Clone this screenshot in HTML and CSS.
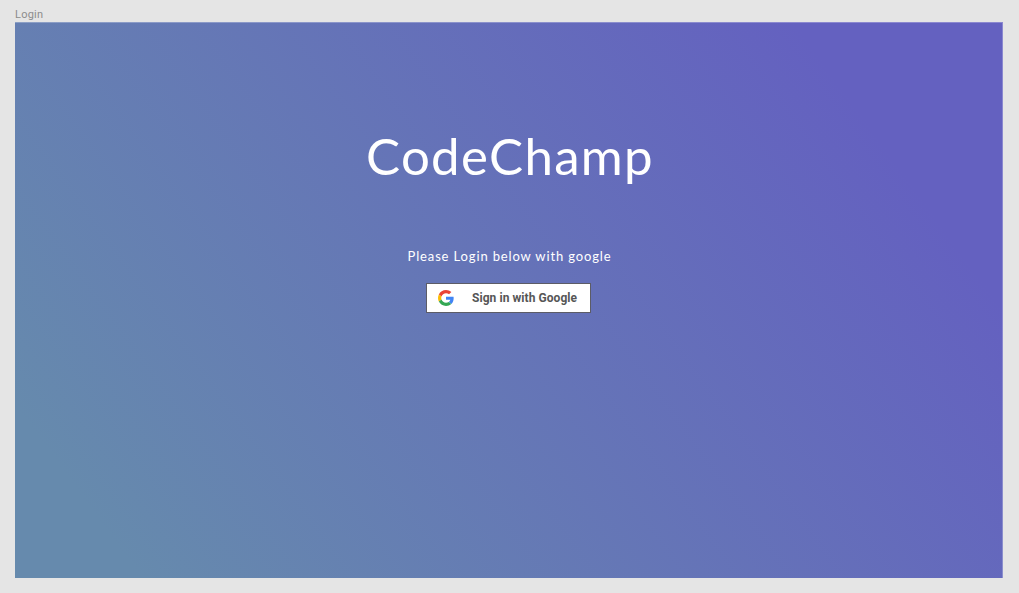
FILE: index.html
```html
<!DOCTYPE html>
<html lang="en">
<head>
<meta charset="utf-8">
<title>Login</title>
<link rel="stylesheet" href="styles.css">
</head>
<body>
<div class="label">Login</div>
<main class="frame">
<h1 class="title">CodeChamp</h1>
<p class="hint">Please Login below with google</p>
<button class="google">
<svg class="logo" viewBox="0 0 48 48"><path fill="#EA4335" d="M24 9.5c3.54 0 6.71 1.22 9.21 3.6l6.85-6.85C35.9 2.38 30.47 0 24 0 14.62 0 6.51 5.38 2.56 13.22l7.98 6.19C12.43 13.72 17.74 9.5 24 9.5z"/><path fill="#4285F4" d="M46.98 24.55c0-1.57-.15-3.09-.38-4.55H24v9.02h12.94c-.58 2.96-2.26 5.48-4.78 7.18l7.73 6c4.51-4.18 7.09-10.36 7.09-17.65z"/><path fill="#FBBC05" d="M10.53 28.59c-.48-1.45-.76-2.99-.76-4.59s.27-3.14.76-4.59l-7.98-6.19C.92 16.46 0 20.12 0 24c0 3.88.92 7.54 2.56 10.78l7.97-6.19z"/><path fill="#34A853" d="M24 48c6.48 0 11.93-2.13 15.89-5.81l-7.73-6c-2.15 1.45-4.92 2.3-8.16 2.3-6.26 0-11.57-4.22-13.47-9.91l-7.98 6.19C6.51 42.62 14.62 48 24 48z"/></svg>
<span class="caption">Sign in with Google</span>
</button>
</main>
</body>
</html>
```
FILE: styles.css
```css
* { box-sizing: border-box; }
body {
  margin: 0;
  height: 593px;
  padding: 7px 16px 15px 15px;
  background: #e5e5e5;
  display: flex;
  flex-direction: column;
  overflow: hidden;
}
.label {
  font: 11px/15px Roboto, sans-serif;
  letter-spacing: 0.25px;
  color: #8c8c8c;
}
.frame {
  flex: 1;
  display: flex;
  flex-direction: column;
  align-items: center;
  background: linear-gradient(54deg, #668aad 9%, #6461c0 85%);
  box-shadow: inset -1px 1px 0 rgba(255, 255, 255, 0.25);
}
.title {
  margin: 99px 0 0 2px;
  font: 400 51px/70px Lato, sans-serif;
  letter-spacing: 1.3px;
  white-space: nowrap;
  color: #fff;
}
.hint {
  margin: 55px 0 0 1px;
  font: 400 13px/20px Lato, sans-serif;
  letter-spacing: 0.86px;
  white-space: nowrap;
  color: #fff;
}
.google {
  margin: 17px 1px 0 0;
  width: 165px;
  height: 30px;
  padding: 0 0 0 11px;
  display: flex;
  align-items: center;
  gap: 18px;
  border: 1px solid #5c5c66;
  background: #fff;
}
.logo { width: 16px; height: 16px; flex: none; }
.caption {
  font: 700 12px/16px Roboto, sans-serif;
  letter-spacing: 0.06px;
  color: #565656;
  white-space: nowrap;
}
```
